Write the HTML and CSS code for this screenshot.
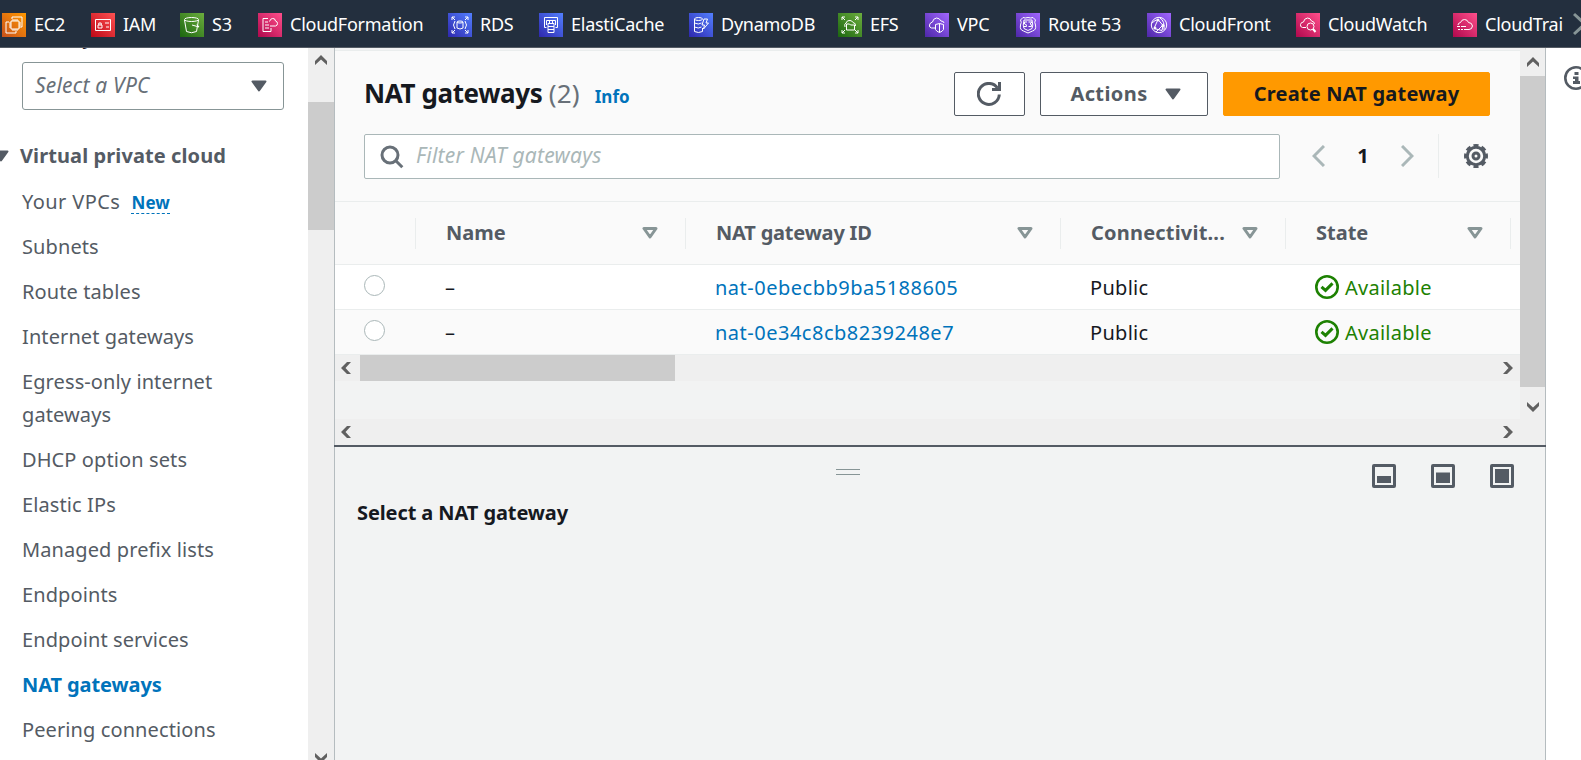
FILE: index.html
```html
<!DOCTYPE html>
<html lang="en">
<head>
<meta charset="utf-8">
<title>NAT gateways | VPC Management Console</title>
<link rel="stylesheet" href="styles.css">
</head>
<body>
<svg class="defs" width="0" height="0">
  <symbol id="down" viewBox="0 0 16 12"><path d="M1.5 1.5h13L8 10.5z" fill="currentColor" stroke="currentColor" stroke-width="2" stroke-linejoin="round"/></symbol>
  <symbol id="sort" viewBox="0 0 16 12"><path d="M2 1.5h12L8 10z" fill="none" stroke="currentColor" stroke-width="3" stroke-linejoin="round"/></symbol>
  <symbol id="chev" viewBox="0 0 12 10"><path d="M0 6L6 0l6 6v4L6 4.5 0 10z" fill="currentColor"/></symbol>
  <symbol id="ok" viewBox="0 0 24 24"><g fill="none" stroke="currentColor"><circle cx="12" cy="12" r="10.7" stroke-width="2.6"/><path d="M6.5 11.800l4 3.600 7-7" stroke-width="3"/></g></symbol>
</svg>
<nav class="topnav">
  <a class="svc orange"><svg viewBox="0 0 24 24"><path d="M9 8h8v8H9zM11 6v2m2-2v2m2-2v2m-4 8v2m2-2v2m2-2v2M7 10h2m-2 2h2m-2 2h2m8-4h2m-2 2h2m-2 2h2M10 6V4h10v10h-1M7 9H4v11h10v-2"/></svg><span>EC2</span></a>
  <a class="svc red"><svg viewBox="0 0 24 24"><path d="M4.500 6.500h15v11h-15zM7 12h4v3H7zM7.800 12v-2h2.400v2M14 10h4m-3 4h3"/></svg><span>IAM</span></a>
  <a class="svc green"><svg viewBox="0 0 24 24"><path d="M4.500 7l2 11.500q5 2.500 10 0L18.500 7M12 12l7 2-2-2.500"/><ellipse cx="11.500" cy="6.500" rx="7" ry="2"/></svg><span>S3</span></a>
  <a class="svc pink"><svg viewBox="0 0 24 24"><path d="M10 5.500H5v13h8V15M7 9h3m-3 3h4m-4 3h4M12 13h5.500q2-.5 2-2.500t-2-2.500q-.5-3-3-2.500-2 0-3 3"/></svg><span>CloudFormation</span></a>
  <a class="svc blue"><svg viewBox="0 0 24 24"><path d="M9 9v6q3 2 6 0V9M7 8q-3 4 0 8M17 8q3 4 0 8M4 7V4h3M4 4l3 3M17 4h3v3m0-3l-3 3M4 17v3h3m-3 0l3-3M20 17v3h-3m3 0l-3-3"/><ellipse cx="12" cy="9" rx="3" ry="1"/></svg><span>RDS</span></a>
  <a class="svc blue"><svg viewBox="0 0 24 24"><path d="M7.500 14.500h-2v-10h13v10h-2M7.500 12V7.500h9V12M10.500 7.500V10m3-2.500V10M9 10.500h6v9H9zM9 13.500h6m-6 3h6"/></svg><span>ElastiCache</span></a>
  <a class="svc blue"><svg viewBox="0 0 24 24"><path d="M5.500 6v12.500q4 2 8 0V15M5.500 10q4 2 7 0m-7 4q4 2 7 0M15 6l-2 6h2.500l-1 4 5-6h-2.500l1.500-4z"/><ellipse cx="9.500" cy="6" rx="4" ry="1.500"/></svg><span>DynamoDB</span></a>
  <a class="svc green"><svg viewBox="0 0 24 24"><path d="M8.500 11h3l1 1h4v5h-8zM7 14q-1-3 1-4 1-3 4-2.500 2 0 3 2 3 .5 2.500 3.500M4 7V4h3M4 4l3 3M17 4h3v3m0-3l-3 3M4 17v3h3m-3 0l3-3M20 17v3h-3m3 0l-3-3"/></svg><span>EFS</span></a>
  <a class="svc purple"><svg viewBox="0 0 24 24"><path d="M10 15H6.500Q4 14.500 4.500 12t3-3q.5-3.500 4-4 3 0 4.500 3 3 0 3 2M14.500 10.500l4 1v5q-1 2-4 3-3-1-4-3v-5zM14.500 10.500v9"/></svg><span>VPC</span></a>
  <a class="svc purple"><svg viewBox="0 0 24 24"><path d="M7 4.500q2 1 5 0 3 1 5 0l2.500 2.500q-1.500 2 0 5 1 5-3 6l-4.500 2-4.500-2q-4-1-3-6 1.500-3 0-5zM8 7h8q1.500 6 0 8.500l-4 2-4-2Q6.500 13 8 7M11 9H8.500v2q2.500 0 2 2.500H8M12.500 9H16l-2 2q2 0 1.500 2.500h-3"/></svg><span>Route 53</span></a>
  <a class="svc purple"><svg viewBox="0 0 24 24"><circle cx="12" cy="12" r="7.700"/><path d="M11 6.500l-4 9 8 2 1-5zM5 10q3-3 6-3.500M9 19l6-6M13 5q5 3 4 12"/><g fill="#fff"><circle cx="11" cy="7" r="1"/><circle cx="16" cy="12.500" r="1"/><circle cx="8" cy="15" r="1"/></g></svg><span>CloudFront</span></a>
  <a class="svc pink"><svg viewBox="0 0 24 24"><path d="M10 14.500H6.500Q4 14 4.500 11.500t3-2.500q.5-3.500 4-4 3 0 4 3 3 .5 3 3"/><circle cx="14.500" cy="13.500" r="3.500"/><path d="M17 16l2.500 3" stroke-width="2"/></svg><span>CloudWatch</span></a>
  <a class="svc pink"><svg viewBox="0 0 24 24"><path d="M5 12q0-2 2.500-2.500 1-3 4-3 3 0 4 3 3.500 0 4 3.500-.5 3.500-3.500 3.500h-5M4 13.500h3m1 0h5M5 16.500h2m1 0h2"/></svg><span>CloudTrai</span></a>
  <svg class="next" viewBox="0 0 14 24"><path d="M1 2l11 10L1 22"/></svg>
</nav>
<div class="body">
  <aside class="side">
    <div class="side-in">
      <div class="lbl">Filter by VPC:</div>
      <div class="select"><span>Select a VPC</span><svg class="a16"><use href="#down"/></svg></div>
      <h2><svg class="a16 tri"><use href="#down"/></svg><span>Virtual private cloud</span></h2>
      <ul>
        <li><span class="vpcs">Your VPCs</span> <b class="new">New</b></li>
        <li>Subnets</li>
        <li>Route tables</li>
        <li>Internet gateways</li>
        <li>Egress-only internet<br>gateways</li>
        <li>DHCP option sets</li>
        <li>Elastic IPs</li>
        <li>Managed prefix lists</li>
        <li>Endpoints</li>
        <li>Endpoint services</li>
        <li class="on">NAT gateways</li>
        <li>Peering connections</li>
      </ul>
    </div>
    <div class="vbar side-bar"><svg><use href="#chev"/></svg><i></i><svg class="dn"><use href="#chev"/></svg></div>
  </aside>
  <main>
    <section class="upper">
      <div class="content">
        <header>
          <div class="row1">
            <h1>NAT gateways <span>(2)</span></h1><a class="info">Info</a>
            <button class="btn refresh"><svg viewBox="0 0 24 24"><path d="M22.300 12.500A10.500 10.500 0 1 1 20.500 6M22.500 0v7.500H15" fill="none" stroke="currentColor" stroke-width="3"/></svg></button>
            <button class="btn actions"><span>Actions</span><svg class="a16"><use href="#down"/></svg></button>
            <button class="btn create"><span>Create NAT gateway</span></button>
          </div>
          <div class="row2">
            <div class="search"><svg viewBox="0 0 24 24"><g fill="none" stroke="currentColor" stroke-width="3"><circle cx="10" cy="10" r="8"/><path d="M15.800 15.800l6.500 6.500"/></g></svg><span>Filter NAT gateways</span></div>
            <div class="pager"><svg viewBox="0 0 13 22"><path d="M12 1L2 11l10 10"/></svg><b>1</b><svg viewBox="0 0 13 22"><path d="M1 1l10 10L1 21"/></svg></div>
            <div class="gear"><svg viewBox="0 0 24 24"><g fill="none" stroke="currentColor"><circle cx="12" cy="12" r="8.700" stroke-width="3"/><circle cx="12" cy="12" r="10.500" stroke-width="3" stroke-dasharray="5.200 3.280" stroke-dashoffset="2.600" pathLength="67.840"/><circle cx="12" cy="12" r="3" stroke-width="3"/></g></svg></div>
          </div>
        </header>
        <div class="tr th">
          <div></div>
          <div><span>Name</span><svg class="a16"><use href="#sort"/></svg></div>
          <div><span class="t-id">NAT gateway ID</span><svg class="a16"><use href="#sort"/></svg></div>
          <div><span class="t-conn">Connectivit...</span><svg class="a16"><use href="#sort"/></svg></div>
          <div><span>State</span><svg class="a16"><use href="#sort"/></svg></div>
          <div></div>
        </div>
        <div class="tr"><div><i class="radio"></i></div><div>–</div><div class="link">nat-0ebecbb9ba5188605</div><div class="pub">Public</div><div class="ok"><svg><use href="#ok"/></svg><span>Available</span></div></div>
        <div class="tr alt"><div><i class="radio"></i></div><div>–</div><div class="link">nat-0e34c8cb8239248e7</div><div class="pub">Public</div><div class="ok"><svg><use href="#ok"/></svg><span>Available</span></div></div>
        <div class="hbar"><svg class="lf"><use href="#chev"/></svg><i></i><svg class="rt"><use href="#chev"/></svg></div>
        <div class="space"></div>
        <div class="hbar"><svg class="lf"><use href="#chev"/></svg><svg class="rt"><use href="#chev"/></svg></div>
      </div>
      <div class="vbar main-bar"><svg><use href="#chev"/></svg><i></i><svg class="dn"><use href="#chev"/></svg></div>
    </section>
    <section class="split">
      <div class="handle"></div>
      <div class="sizes">
        <svg viewBox="0 0 24 24"><rect x="1.500" y="1.500" width="21" height="21" rx=".5"/><path d="M5 12h14v7H5z"/></svg>
        <svg viewBox="0 0 24 24"><rect x="1.500" y="1.500" width="21" height="21" rx=".5"/><path d="M5 8.500h14V19H5z"/></svg>
        <svg viewBox="0 0 24 24"><rect x="1.500" y="1.500" width="21" height="21" rx=".5"/><path d="M5 5h14v14H5z"/></svg>
      </div>
      <h3>Select a NAT gateway</h3>
    </section>
  </main>
  <aside class="help"><svg viewBox="0 0 24 24"><circle cx="12" cy="12" r="10.700" fill="none" stroke="currentColor" stroke-width="2.600"/><path d="M10.500 6h4v3h-4zM9 10.500h5.500V15H16v3H9v-3h2v-2H9z" fill="currentColor"/></svg></aside>
</div>
</body>
</html>
```
FILE: styles.css
```css
* { box-sizing: border-box; }
body { margin: 0; width: 1581px; height: 760px; overflow: hidden; background: #fff; color: #16191f; font: 20px/33px "Noto Sans", "Open Sans", sans-serif; display: flex; flex-direction: column; }
svg { display: block; flex: none; }
.defs { position: absolute; }
h1, h2, h3, ul { margin: 0; padding: 0; list-style: none; }
button { font: inherit; }

.topnav { height: 48px; flex: none; background: #232f3e; border-bottom: 1px solid #545b64; display: grid; grid-template-columns: 89px 89px 78px 190px 91px 150px 149px 87px 91px 131px 149px 157px 120px 14px; padding-left: 2px; align-items: center; overflow: hidden; color: #fff; }
.svc { display: flex; align-items: center; gap: 8px; font-size: 18px; line-height: 24px; letter-spacing: -.25px; white-space: nowrap; padding-top: 2px; }
.svc span { padding-bottom: 1px; }
.svc svg { width: 24px; height: 24px; fill: none; stroke: #fff; stroke-width: 1; }
.orange svg { background: linear-gradient(45deg, #c8511b, #f90); }
.red svg { background: linear-gradient(45deg, #bd0816, #ff5252); }
.green svg { background: linear-gradient(45deg, #1b660f, #6cae3e); }
.pink svg { background: linear-gradient(45deg, #b0084d, #ff4f8b); }
.blue svg { background: linear-gradient(45deg, #2e27ad, #527fff); }
.purple svg { background: linear-gradient(45deg, #4d27a8, #a166ff); }
.next { width: 14px; height: 24px; fill: none; stroke: #879596; stroke-width: 3; }

.body { flex: 1; min-height: 0; display: flex; overflow: hidden; }
.side { width: 334px; flex: none; display: flex; overflow: hidden; }
.side-in { width: 308px; color: #545b64; letter-spacing: .1px; }
.lbl { height: 33px; margin: -26px 0 7px 22px; color: #16191f; font-weight: 700; font-size: 17px; }
.a16 { width: 16px; height: 12px; }
.select { margin: 0 24px 0 22px; height: 48px; border: 1px solid #879596; border-radius: 3px; display: flex; align-items: center; justify-content: space-between; padding: 0 16px 0 12px; font-style: italic; font-size: 21px; letter-spacing: .2px; color: #687078; }
.select span, .search span, .th span, .btn span { padding-bottom: 2px; }
.select .a16 { color: #545b64; }
.side h2 { margin-top: 29px; font-size: 20px; line-height: 33px; display: flex; align-items: center; height: 33px; }
.tri { margin: 0 11px 0 -7px; }
.side ul { padding: 13px 0 0 22px; }
.side li { margin-bottom: 12px; }
.vpcs { letter-spacing: .4px; }
.new { color: #0073bb; font-size: 17px; line-height: 21px; margin-left: 6px; border-bottom: 1px dashed #0073bb; display: inline-block; }
.on { color: #0073bb; font-weight: 700; letter-spacing: -.1px; }

.vbar { width: 26px; background: #efefef; color: #606060; display: flex; flex-direction: column; align-items: center; overflow: hidden; }
.vbar svg, .hbar svg { width: 12px; height: 10px; }
.vbar i { width: 26px; background: #ccc; flex: none; }
.dn { transform: rotate(180deg); }
.side-bar svg:first-child { margin: 7px 0 37px; }
.side-bar i { height: 128px; }
.side-bar .dn { margin-top: 523px; }
.main-bar svg:first-child { margin: 9px 0 9px; }
.main-bar i { height: 311px; }
.main-bar .dn { margin-top: 15px; }

main { width: 1212px; flex: none; background: #f2f3f3; border-left: 1px solid #b5bcbf; border-right: 1px solid #b5bcbf; display: flex; flex-direction: column; }
.upper { height: 397px; flex: none; display: flex; }
.content { width: 1185px; flex: none; padding-top: 2px; }
header { height: 151px; background: #fafafa; border-top: 1px solid #eaeded; padding: 21px 30px 0 29px; }
.row1, .row2 { display: flex; }
.row1 { height: 44px; align-items: center; }
.row2 { margin-top: 18px; height: 45px; }
h1 { font-size: 26px; line-height: 42px; padding-bottom: 2px; white-space: nowrap; letter-spacing: -.4px; }
h1 span { font-weight: 400; color: #687078; letter-spacing: .2px; }
.info { color: #0073bb; font-weight: 700; font-size: 17px; margin: 4px auto 0 15px; }
.btn { height: 44px; background: #fff; border: 1px solid #545b64; border-radius: 2px; color: #545b64; font-weight: 700; letter-spacing: .4px; display: flex; align-items: center; justify-content: center; padding: 0; white-space: nowrap; }
.refresh { width: 71px; padding-right: 2px; }
.refresh svg { width: 24px; height: 24px; }
.actions { width: 168px; margin: 0 15px; gap: 17px; padding-left: 3px; }
.create { width: 267px; background: #f90; border-color: #f90; color: #16191f; letter-spacing: .2px; }
.search { width: 916px; border: 1px solid #aab7b8; border-radius: 2px; background: #fff; display: flex; align-items: center; gap: 12px; padding-left: 15px; color: #aab7b8; font-style: italic; font-size: 21px; letter-spacing: .25px; }
.search svg { width: 24px; height: 24px; color: #687078; }
.pager { display: flex; align-items: center; width: 159px; padding: 0 24px 0 32px; border-right: 1px solid #eaeded; justify-content: space-between; height: 44px; }
.pager b { padding-bottom: 2px; }
.pager svg { width: 13px; height: 22px; fill: none; stroke: #aab7b8; stroke-width: 3; }
.gear { margin: 10px 0 0 25px; color: #545b64; }
.gear svg { width: 24px; height: 24px; }

.tr { display: grid; grid-template-columns: 80px 270px 375px 225px 225px 10px; height: 45px; background: #fff; border-bottom: 1px solid #eaeded; align-items: center; }
.tr > div { padding-left: 30px; }
.tr.alt { background: #fafafa; }
.th { height: 64px; background: #fafafa; border-top: 1px solid #eaeded; color: #545b64; font-weight: 700; }
.th > div { display: flex; align-items: center; justify-content: space-between; height: 31px; padding: 0 27px 0 30px; border-left: 1px solid #eaeded; white-space: nowrap; }
.th > div:first-child { border: 0; }
.th .a16 { color: #879596; }
.t-id { letter-spacing: -.2px; }
.t-conn { letter-spacing: .2px; }
.radio { display: block; width: 21px; height: 21px; margin: -4px 0 0 -1px; border: 1px solid #aab7b8; border-radius: 50%; background: #fff; }
.tr > .link { color: #0073bb; letter-spacing: .5px; }
.pub { letter-spacing: .3px; }
.ok { display: flex; align-items: center; gap: 6px; color: #1d8102; letter-spacing: .25px; }
.ok svg { width: 24px; height: 24px; }

.hbar { height: 26px; background: #efefef; color: #606060; display: flex; align-items: center; padding: 0 6px 0 5px; }
.hbar i { width: 315px; height: 26px; background: #ccc; margin-left: 8px; }
.lf { transform: rotate(-90deg); }
.rt { transform: rotate(90deg); margin-left: auto; }
.space { height: 38px; }

.split { flex: 1; border-top: 2px solid #545b64; margin: 0 -1px; }
.handle { width: 24px; height: 6px; margin: 22px auto 0 502px; border: solid #879596; border-width: 1px 0; }
.sizes { display: flex; gap: 35px; justify-content: flex-end; padding-right: 32px; margin-top: -11px; }
.sizes svg { width: 24px; height: 24px; fill: #545b64; }
.sizes rect { fill: none; stroke: #545b64; stroke-width: 3; }
h3 { margin: 8px 0 0 23px; font-size: 20px; line-height: 33px; letter-spacing: -.1px; }
.help { flex: none; width: 35px; overflow: hidden; color: #545b64; padding: 18px 0 0 18px; }
.help svg { width: 24px; height: 24px; }
```
